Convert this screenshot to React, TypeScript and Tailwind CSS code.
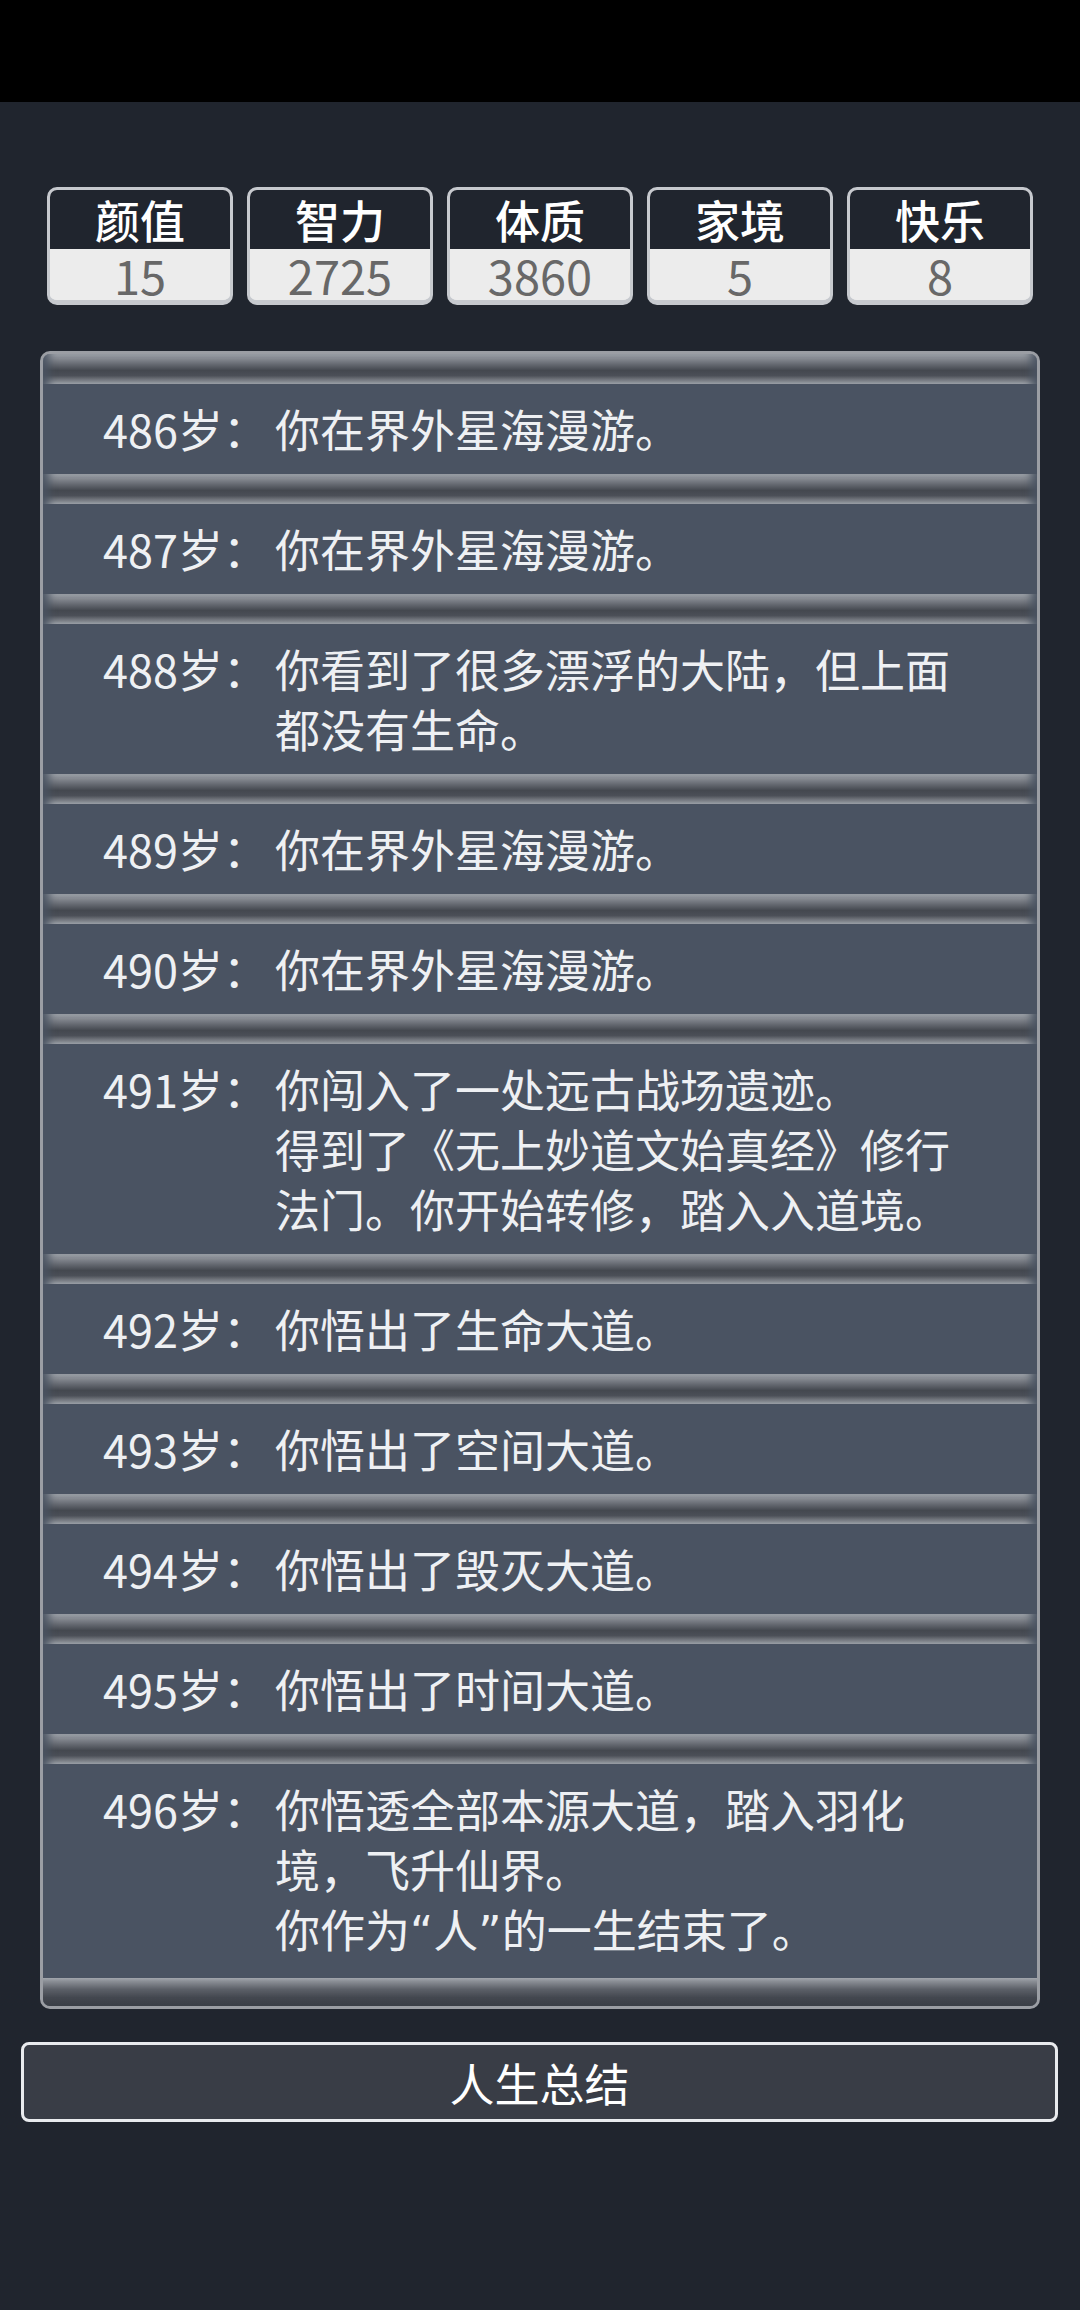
import React from "react";

const stats = [
  { label: "颜值", value: "15" },
  { label: "智力", value: "2725" },
  { label: "体质", value: "3860" },
  { label: "家境", value: "5" },
  { label: "快乐", value: "8" },
];

const Q = ({ c }: { c: string }) => (
  <span className="font-['DejaVu_Sans',sans-serif]">{c}</span>
);

const events: { age: number; lines: React.ReactNode[] }[] = [
  { age: 486, lines: ["你在界外星海漫游。"] },
  { age: 487, lines: ["你在界外星海漫游。"] },
  { age: 488, lines: ["你看到了很多漂浮的大陆，但上面", "都没有生命。"] },
  { age: 489, lines: ["你在界外星海漫游。"] },
  { age: 490, lines: ["你在界外星海漫游。"] },
  {
    age: 491,
    lines: [
      "你闯入了一处远古战场遗迹。",
      "得到了《无上妙道文始真经》修行",
      "法门。你开始转修，踏入入道境。",
    ],
  },
  { age: 492, lines: ["你悟出了生命大道。"] },
  { age: 493, lines: ["你悟出了空间大道。"] },
  { age: 494, lines: ["你悟出了毁灭大道。"] },
  { age: 495, lines: ["你悟出了时间大道。"] },
  {
    age: 496,
    lines: [
      "你悟透全部本源大道，踏入羽化",
      "境，飞升仙界。",
      <>
        你作为<Q c="“" />人<Q c="”" />的一生结束了。
      </>,
    ],
  },
];

function Band() {
  return (
    <div className="h-[30px] bg-[linear-gradient(to_bottom,#a4a8ae_0%,#8f939a_10%,#646870_35%,#44484f_55%,#4b4f57_72%,#80848b_90%,#a8acb2_100%)] shadow-[inset_12px_0_8px_-6px_rgba(74,83,98,0.95),inset_-12px_0_8px_-6px_rgba(74,83,98,0.95)]" />
  );
}

function BottomBand() {
  return (
    <div className="h-[28px] bg-[linear-gradient(to_bottom,#a2a6ad_0%,#8a8e95_12%,#5c6068_40%,#43474f_70%,#3b3f47_100%)]" />
  );
}

function Row({ age, lines }: { age: number; lines: React.ReactNode[] }) {
  return (
    <div className="flex bg-[#4a5362] py-[15px] pl-[60px] text-[45px] leading-[60px] text-[#eef0f3]">
      <div className="w-[172px] shrink-0 whitespace-nowrap">{age}岁：</div>
      <div className="flex flex-col">
        {lines.map((l, i) => (
          <div key={i} className="whitespace-nowrap">
            {l}
          </div>
        ))}
      </div>
    </div>
  );
}

export default function App() {
  return (
    <div className="min-h-[2310px] w-[1080px] bg-[#20252e] font-['Noto_Sans_CJK_SC','Noto_Sans',sans-serif]">
      <div className="h-[102px] bg-black" />
      <div className="grid grid-cols-5 gap-[14px] px-[47px] pt-[85px]">
        {stats.map((s) => (
          <div
            key={s.label}
            className="flex flex-col rounded-[10px] border-[3px] border-b-[5px] border-[#c6c9ce] bg-[#ececec]"
          >
            <div className="flex h-[59px] items-center justify-center rounded-t-[7px] bg-[#20252e] text-[45px] font-medium leading-none text-white">
              {s.label}
            </div>
            <div className="flex h-[51px] items-center justify-center rounded-b-[7px] bg-[#ececec] text-[47px] leading-none text-[#686868]">
              {s.value}
            </div>
          </div>
        ))}
      </div>
      <div className="mx-[40px] mt-[46px] overflow-hidden rounded-[10px] border-[3px] border-[#9b9ea4] bg-[#4a5362]">
        <Band />
        {events.map((e, i) => (
          <React.Fragment key={e.age}>
            <Row age={e.age} lines={e.lines} />
            {i < events.length - 1 ? <Band /> : <BottomBand />}
          </React.Fragment>
        ))}
      </div>
      <div className="ml-[21px] mr-[22px] mt-[33px] flex h-[80px] items-center justify-center rounded-[8px] border-[3px] border-[#e9ebee] bg-[#393d46] text-[45px] leading-none text-white">
        人生总结
      </div>
    </div>
  );
}
